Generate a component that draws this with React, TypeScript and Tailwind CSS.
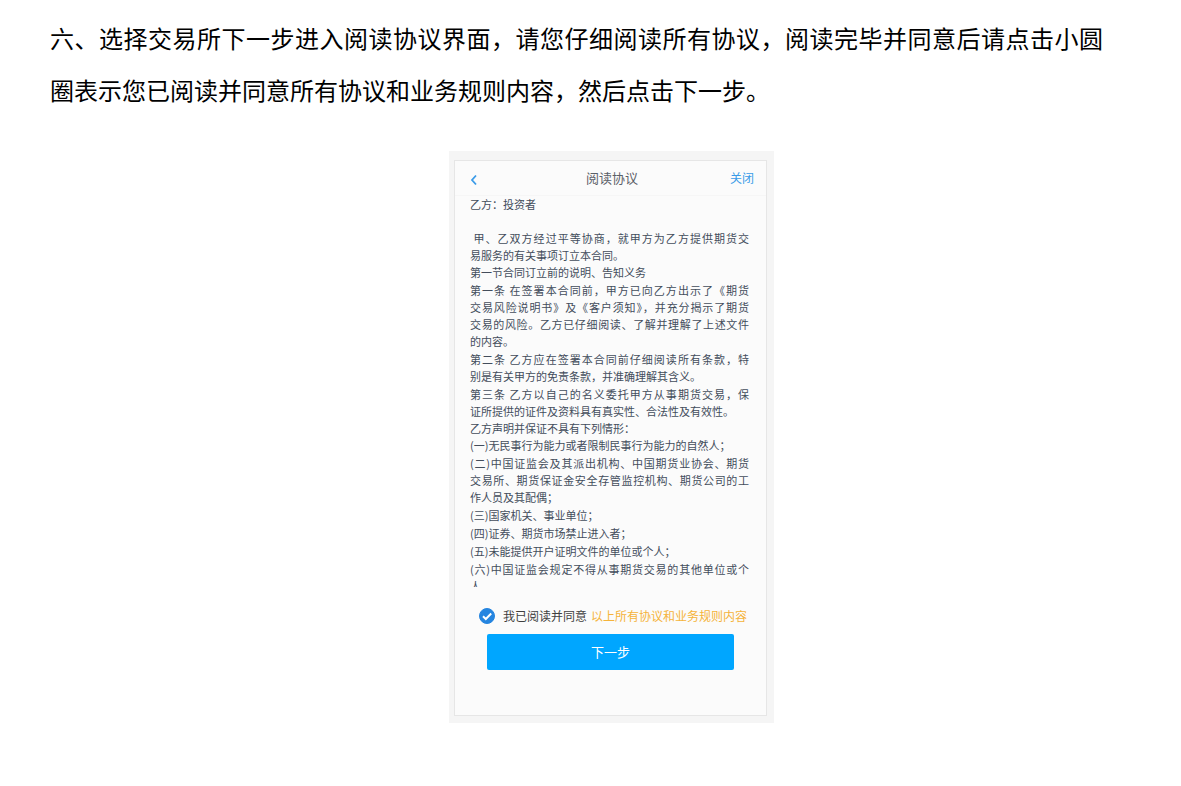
import React, { useState } from "react";

// Each clause is a list of printed lines; every line but the last fills the column.
const CLAUSES: string[][] = [
    ["\u00a0甲、乙双方经过平等协商，就甲方为乙方提供期货交", "易服务的有关事项订立本合同。"],
    ["第一节合同订立前的说明、告知义务"],
];

const ARTICLES: string[][] = [
    [
        "第一条 在签署本合同前，甲方已向乙方出示了《期货",
        "交易风险说明书》及《客户须知》，并充分揭示了期货",
        "交易的风险。乙方已仔细阅读、了解并理解了上述文件",
        "的内容。",
    ],
    ["第二条 乙方应在签署本合同前仔细阅读所有条款，特", "别是有关甲方的免责条款，并准确理解其含义。"],
    ["第三条 乙方以自己的名义委托甲方从事期货交易，保", "证所提供的证件及资料具有真实性、合法性及有效性。"],
];

const SITUATIONS: string[][] = [
    ["(一)无民事行为能力或者限制民事行为能力的自然人；"],
    ["(二)中国证监会及其派出机构、中国期货业协会、期货", "交易所、期货保证金安全存管监控机构、期货公司的工", "作人员及其配偶；"],
    ["(三)国家机关、事业单位；"],
    ["(四)证券、期货市场禁止进入者；"],
    ["(五)未能提供开户证明文件的单位或个人；"],
    ["(六)中国证监会规定不得从事期货交易的其他单位或个", "人"],
];

function Lines({ lines }: { lines: string[] }) {
    return (
        <>
            {lines.map((line, i) => (
                <span
                    key={line}
                    className={i < lines.length - 1 ? "block whitespace-nowrap [text-align-last:justify]" : "block whitespace-nowrap"}
                >
                    {line}
                </span>
            ))}
        </>
    );
}

function PhoneHeader() {
    return (
        <header className="grid h-[35px] grid-cols-3 items-center border-b border-[#f6f6f6] pl-[15px] pr-3">
            <button type="button" aria-label="返回" className="justify-self-start pt-1 text-[#3a9be8]">
                <svg width="8" height="12" viewBox="0 0 8 12" fill="none" stroke="currentColor" strokeWidth="1.8">
                    <path d="M6 1.500 2 6l4 4.500" />
                </svg>
            </button>
            <h1 className="text-center text-[13px] text-[#5b6068]">阅读协议</h1>
            <button type="button" className="justify-self-end text-xs text-[#3a9be8]">关闭</button>
        </header>
    );
}

function Agreement() {
    return (
        <section className="h-[391px] overflow-hidden pl-[15px] pr-[17px] text-[11px] leading-[17px] text-[#434d5b]">
            <p className="mb-[17px]">乙方：投资者</p>
            {CLAUSES.map((lines) => (
                <p key={lines[0]}><Lines lines={lines} /></p>
            ))}
            {ARTICLES.map((lines) => (
                <p key={lines[0]} className="mt-px"><Lines lines={lines} /></p>
            ))}
            <p>乙方声明并保证不具有下列情形：</p>
            <ul className="flex flex-col gap-px">
                {SITUATIONS.map((lines) => (
                    <li key={lines[0]}><Lines lines={lines} /></li>
                ))}
            </ul>
        </section>
    );
}

function Consent() {
    const [agreed, setAgreed] = useState(true);

    return (
        <div className="mt-[21px] flex h-4 items-center whitespace-nowrap pl-6 text-xs">
            <span className="relative mr-2 size-4 shrink-0">
                <input
                    id="agree"
                    type="checkbox"
                    checked={agreed}
                    onChange={(e) => setAgreed(e.target.checked)}
                    className="block size-4 appearance-none rounded-full border border-[#2585e0] checked:bg-[#2585e0]"
                />
                {agreed && (
                    <svg className="pointer-events-none absolute inset-0" viewBox="0 0 16 16" fill="none" stroke="white" strokeWidth="2">
                        <path d="M4 8.300 6.800 11 12.200 5.500" />
                    </svg>
                )}
            </span>
            <label htmlFor="agree" className="mr-1 text-[#3f3f3f]">我已阅读并同意</label>
            <a href="#rules" className="text-[#f5b33a]">以上所有协议和业务规则内容</a>
        </div>
    );
}

export default function App() {
    return (
        <main
            lang="zh-CN"
            className="min-h-screen bg-white pl-[50px] pr-2 pt-3 font-['Noto_Sans_CJK_SC',sans-serif] text-black"
        >
            <p className="mr-[70px] text-justify text-2xl leading-[52px]">
                六、选择交易所下一步进入阅读协议界面，请您仔细阅读所有协议，阅读完毕并同意后请点击小圆圈表示您已阅读并同意所有协议和业务规则内容，然后点击下一步。
            </p>

            <div className="mx-auto mt-[35px] w-[325px] bg-[#f5f5f5] pb-[7px] pl-[5px] pr-[7px] pt-[9px]">
                <div className="border border-[#e6e6e6] bg-[#fbfbfb] pb-[45px]">
                    <PhoneHeader />
                    <Agreement />
                    <Consent />
                    <div className="mt-2.5 px-8">
                        <button type="button" className="h-9 w-full rounded-xs bg-[#00a6ff] text-[13px] text-white">下一步</button>
                    </div>
                </div>
            </div>
        </main>
    );
}
